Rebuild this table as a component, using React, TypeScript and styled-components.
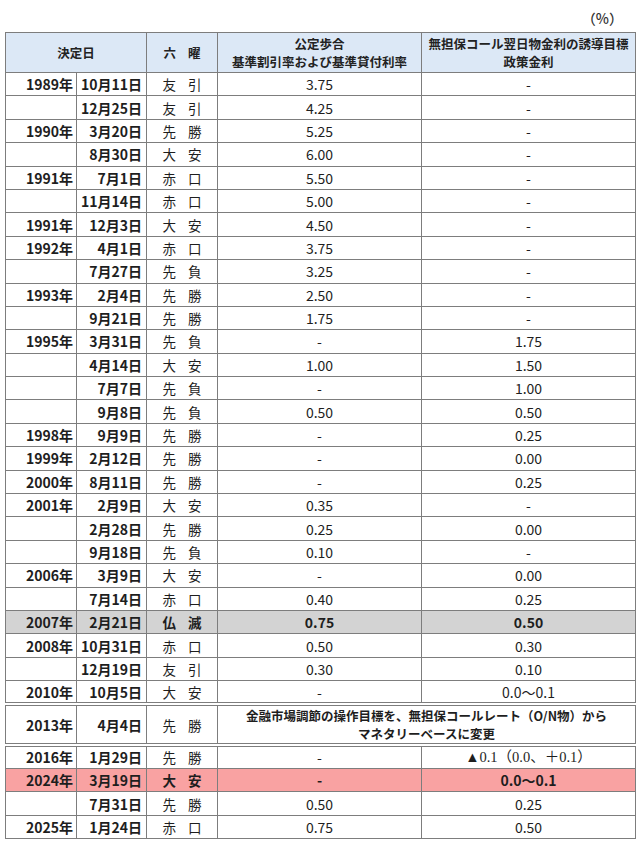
import React from 'react';
import styled, { createGlobalStyle } from 'styled-components';

const GlobalStyle = createGlobalStyle`
  html, body {
    margin: 0;
    padding: 0;
    background: #fff;
  }
  body {
    font-family: 'Noto Sans CJK JP', 'DejaVu Sans', sans-serif;
    color: #1e1e1e;
  }
`;

const Page = styled.div`
  width: 640px;
  padding: 0 5px;
  box-sizing: border-box;
`;

const Unit = styled.div`
  height: 32px;
  display: flex;
  align-items: center;
  justify-content: flex-end;
  padding-right: 12px;
  padding-top: 4px;
  box-sizing: border-box;
  font-size: 14px;
  font-weight: 500;
  color: #333;
`;

const Table = styled.table`
  width: 630px;
  border-collapse: collapse;
  table-layout: fixed;
  border: 1px solid #7d7d7d;
`;

const HeadRow = styled.tr`
  height: 40px;
  background: #dce8f6;
`;

const Th = styled.th`
  border: 1px solid #7d7d7d;
  padding: 0;
  font-size: 12.5px;
  line-height: 18px;
  font-weight: 700;
  text-align: center;
  color: #222;
`;

type Tone = 'plain' | 'gray' | 'pink';

const toneBg: Record<Tone, string> = {
  plain: '#ffffff',
  gray: '#d3d3d3',
  pink: '#f9a2a2',
};

const Row = styled.tr<{ $tone: Tone; $tall?: boolean; $double?: boolean }>`
  height: ${(p) => (p.$tall ? '41px' : '23.4px')};
  background: ${(p) => toneBg[p.$tone]};
  font-weight: ${(p) => (p.$tone === 'plain' ? 400 : 700)};
  ${(p) =>
    p.$double &&
    `
    & > td { border-top: 4px double #7d7d7d; border-bottom: 4px double #7d7d7d; }
  `}
`;

const Td = styled.td`
  border: 1px solid #7d7d7d;
  padding: 0;
  font-size: 14px;
  line-height: 20px;
  white-space: nowrap;
`;

const YearCell = styled(Td)`
  text-align: right;
  padding-right: 3px;
  font-weight: 700;
`;

const DateCell = styled(Td)`
  text-align: right;
  padding-right: 4px;
  font-weight: 700;
`;

const RokuyoCell = styled(Td)`
  text-align: center;
  font-size: 13.5px;
`;

const Pair = styled.span`
  display: inline-flex;
  gap: 12px;
`;

const RateCell = styled(Td)<{ $serif?: boolean }>`
  text-align: center;
  font-family: ${(p) =>
    p.$serif
      ? "'Liberation Serif', 'Noto Sans CJK JP', serif"
      : "'Noto Sans CJK JP', sans-serif"};
  font-size: ${(p) => (p.$serif ? '14.5px' : '14px')};
`;

const NoteCell = styled(Td)`
  text-align: center;
  font-size: 12.5px;
  line-height: 18px;
  font-weight: 700;
  vertical-align: top;
  padding-top: 1px;
`;

type Entry = {
  year: string;
  date: string;
  rokuyo: string;
  discount: string;
  policy: string;
  tone?: Tone;
  serif?: boolean;
};

const before: Entry[] = [
  { year: '1989年', date: '10月11日', rokuyo: '友引', discount: '3.75', policy: '-' },
  { year: '', date: '12月25日', rokuyo: '友引', discount: '4.25', policy: '-' },
  { year: '1990年', date: '3月20日', rokuyo: '先勝', discount: '5.25', policy: '-' },
  { year: '', date: '8月30日', rokuyo: '大安', discount: '6.00', policy: '-' },
  { year: '1991年', date: '7月1日', rokuyo: '赤口', discount: '5.50', policy: '-' },
  { year: '', date: '11月14日', rokuyo: '赤口', discount: '5.00', policy: '-' },
  { year: '1991年', date: '12月3日', rokuyo: '大安', discount: '4.50', policy: '-' },
  { year: '1992年', date: '4月1日', rokuyo: '赤口', discount: '3.75', policy: '-' },
  { year: '', date: '7月27日', rokuyo: '先負', discount: '3.25', policy: '-' },
  { year: '1993年', date: '2月4日', rokuyo: '先勝', discount: '2.50', policy: '-' },
  { year: '', date: '9月21日', rokuyo: '先勝', discount: '1.75', policy: '-' },
  { year: '1995年', date: '3月31日', rokuyo: '先負', discount: '-', policy: '1.75' },
  { year: '', date: '4月14日', rokuyo: '大安', discount: '1.00', policy: '1.50' },
  { year: '', date: '7月7日', rokuyo: '先負', discount: '-', policy: '1.00' },
  { year: '', date: '9月8日', rokuyo: '先負', discount: '0.50', policy: '0.50' },
  { year: '1998年', date: '9月9日', rokuyo: '先勝', discount: '-', policy: '0.25' },
  { year: '1999年', date: '2月12日', rokuyo: '先勝', discount: '-', policy: '0.00' },
  { year: '2000年', date: '8月11日', rokuyo: '先勝', discount: '-', policy: '0.25' },
  { year: '2001年', date: '2月9日', rokuyo: '大安', discount: '0.35', policy: '-' },
  { year: '', date: '2月28日', rokuyo: '先勝', discount: '0.25', policy: '0.00' },
  { year: '', date: '9月18日', rokuyo: '先負', discount: '0.10', policy: '-' },
  { year: '2006年', date: '3月9日', rokuyo: '大安', discount: '-', policy: '0.00' },
  { year: '', date: '7月14日', rokuyo: '赤口', discount: '0.40', policy: '0.25' },
  { year: '2007年', date: '2月21日', rokuyo: '仏滅', discount: '0.75', policy: '0.50', tone: 'gray' },
  { year: '2008年', date: '10月31日', rokuyo: '赤口', discount: '0.50', policy: '0.30' },
  { year: '', date: '12月19日', rokuyo: '友引', discount: '0.30', policy: '0.10' },
  { year: '2010年', date: '10月5日', rokuyo: '大安', discount: '-', policy: '0.0〜0.1' },
];

const after: Entry[] = [
  { year: '2016年', date: '1月29日', rokuyo: '先勝', discount: '-', policy: '▲0.1（0.0、＋0.1）', serif: true },
  { year: '2024年', date: '3月19日', rokuyo: '大安', discount: '-', policy: '0.0〜0.1', tone: 'pink' },
  { year: '', date: '7月31日', rokuyo: '先勝', discount: '0.50', policy: '0.25' },
  { year: '2025年', date: '1月24日', rokuyo: '赤口', discount: '0.75', policy: '0.50' },
];

const Rokuyo = ({ value }: { value: string }) => (
  <Pair>
    <span>{value[0]}</span>
    <span>{value[1]}</span>
  </Pair>
);

const EntryRow = ({ e }: { e: Entry }) => (
  <Row $tone={e.tone ?? 'plain'}>
    <YearCell>{e.year}</YearCell>
    <DateCell>{e.date}</DateCell>
    <RokuyoCell>
      <Rokuyo value={e.rokuyo} />
    </RokuyoCell>
    <RateCell>{e.discount}</RateCell>
    <RateCell $serif={e.serif}>{e.policy}</RateCell>
  </Row>
);

const App = () => {
  return (
    <Page>
      <GlobalStyle />
      <Unit>（%）</Unit>
      <Table>
        <colgroup>
          <col style={{ width: 71 }} />
          <col style={{ width: 70 }} />
          <col style={{ width: 71 }} />
          <col style={{ width: 204 }} />
          <col style={{ width: 214 }} />
        </colgroup>
        <thead>
          <HeadRow>
            <Th colSpan={2}>決定日</Th>
            <Th>
              <Rokuyo value="六曜" />
            </Th>
            <Th>
              公定歩合
              <br />
              基準割引率および基準貸付利率
            </Th>
            <Th>
              無担保コール翌日物金利の誘導目標
              <br />
              政策金利
            </Th>
          </HeadRow>
        </thead>
        <tbody>
          {before.map((e, i) => (
            <EntryRow key={`b${i}`} e={e} />
          ))}
          <Row $tone="plain" $tall $double>
            <YearCell>2013年</YearCell>
            <DateCell>4月4日</DateCell>
            <RokuyoCell>
              <Rokuyo value="先勝" />
            </RokuyoCell>
            <NoteCell colSpan={2}>
              金融市場調節の操作目標を、無担保コールレート（O/N物）から
              <br />
              マネタリーベースに変更
            </NoteCell>
          </Row>
          {after.map((e, i) => (
            <EntryRow key={`a${i}`} e={e} />
          ))}
        </tbody>
      </Table>
    </Page>
  );
};

export default App;
